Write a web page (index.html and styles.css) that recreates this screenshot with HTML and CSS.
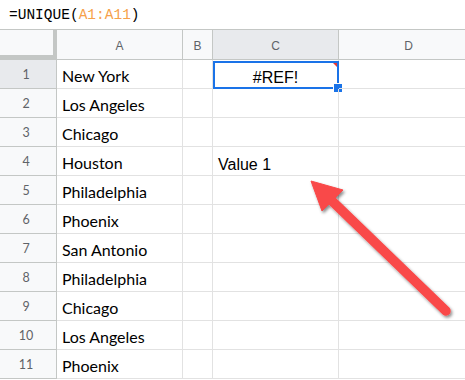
FILE: index.html
```html
<!DOCTYPE html>
<html>
<head>
<meta charset="utf-8">
<link rel="stylesheet" href="styles.css">
</head>
<body>
<div class="page">
  <div class="formula-bar"><span class="fx">=UNIQUE(</span><span class="ref">A1:A11</span><span class="fx">)</span></div>
  <div class="sheet">
    <div class="corner"></div>
    <div class="colhead">A</div>
    <div class="colhead">B</div>
    <div class="colhead sel">C</div>
    <div class="colhead">D</div>

    <div class="rowhead sel">1</div><div class="cell name">New York</div><div class="cell"></div><div class="cell active"><span class="err">#REF!</span><span class="flag"></span><span class="box"></span><span class="handle"></span></div><div class="cell"></div>
    <div class="rowhead">2</div><div class="cell name">Los Angeles</div><div class="cell"></div><div class="cell"></div><div class="cell"></div>
    <div class="rowhead">3</div><div class="cell name">Chicago</div><div class="cell"></div><div class="cell"></div><div class="cell"></div>
    <div class="rowhead">4</div><div class="cell name">Houston</div><div class="cell"></div><div class="cell val">Value 1</div><div class="cell"></div>
    <div class="rowhead">5</div><div class="cell name">Philadelphia</div><div class="cell"></div><div class="cell"></div><div class="cell"></div>
    <div class="rowhead">6</div><div class="cell name">Phoenix</div><div class="cell"></div><div class="cell"></div><div class="cell"></div>
    <div class="rowhead">7</div><div class="cell name">San Antonio</div><div class="cell"></div><div class="cell"></div><div class="cell"></div>
    <div class="rowhead">8</div><div class="cell name">Philadelphia</div><div class="cell"></div><div class="cell"></div><div class="cell"></div>
    <div class="rowhead">9</div><div class="cell name">Chicago</div><div class="cell"></div><div class="cell"></div><div class="cell"></div>
    <div class="rowhead">10</div><div class="cell name">Los Angeles</div><div class="cell"></div><div class="cell"></div><div class="cell"></div>
    <div class="rowhead">11</div><div class="cell name">Phoenix</div><div class="cell"></div><div class="cell"></div><div class="cell"></div>
  </div>
  <svg class="arrow" width="465" height="380" viewBox="0 0 465 380">
    <defs>
      <filter id="sh" x="-20%" y="-20%" width="140%" height="140%">
        <feDropShadow dx="1.5" dy="2" stdDeviation="1.8" flood-color="#000" flood-opacity="0.45"/>
      </filter>
    </defs>
    <g filter="url(#sh)" fill="#f94848" stroke="#f94848">
      <line x1="446" y1="311" x2="330" y2="199" stroke-width="9.5" stroke-linecap="round"/>
      <polygon points="311,181 343,190 322,211" stroke-width="1" stroke-linejoin="round"/>
    </g>
  </svg>
</div>
</body>
</html>
```

FILE: styles.css
```css
html, body {
  margin: 0;
  padding: 0;
  background: #ffffff;
}
.page {
  position: relative;
  width: 465px;
  height: 380px;
  overflow: hidden;
}
.formula-bar {
  height: 30px;
  box-sizing: border-box;
  border-bottom: 1px solid #c4c7c5;
  padding-left: 9px;
  display: flex;
  align-items: center;
  font-family: "Liberation Mono", "DejaVu Sans Mono", monospace;
  font-size: 14.5px;
  color: #000;
}
.ref {
  color: #f6a14b;
}
.sheet {
  display: grid;
  grid-template-columns: 57px 126px 30px 126px 140px;
  grid-template-rows: 30px repeat(11, 29px);
}
.corner {
  background: #f8f9fa;
  border-right: 4px solid #c4c7c5;
  border-bottom: 5px solid #c4c7c5;
}
.colhead {
  background: #f8f9fa;
  border-right: 1px solid #c4c7c5;
  border-bottom: 1px solid #c4c7c5;
  display: flex;
  align-items: center;
  justify-content: center;
  font-family: "Liberation Sans", Arial, sans-serif;
  font-size: 12px;
  color: #5f6368;
  padding-top: 2px;
}
.colhead.sel, .rowhead.sel {
  background: #e8eaed;
}
.rowhead {
  background: #f8f9fa;
  border-right: 1px solid #c4c7c5;
  border-bottom: 1px solid #c4c7c5;
  display: flex;
  align-items: center;
  justify-content: center;
  padding-right: 4px;
  padding-top: 1px;
  font-family: Lato, "Open Sans", sans-serif;
  font-size: 12.5px;
  color: #5f6368;
}
.cell {
  position: relative;
  border-right: 1px solid #e2e2e2;
  border-bottom: 1px solid #e2e2e2;
  display: flex;
  align-items: flex-end;
  padding-left: 5px;
  white-space: nowrap;
  line-height: 18px;
}
.name {
  font-family: Lato, "Open Sans", sans-serif;
  font-size: 16px;
  color: #000;
  padding-bottom: 3px;
}
.val {
  font-family: "Liberation Sans", Arial, sans-serif;
  font-size: 16px;
  color: #000;
  padding-bottom: 1px;
}
.active {
  justify-content: center;
  padding-left: 0;
  padding-bottom: 1px;
  font-family: "Liberation Sans", Arial, sans-serif;
  font-size: 16px;
  color: #000;
}
.box {
  position: absolute;
  left: 0;
  top: 1px;
  right: -1px;
  bottom: -1px;
  border: 2px solid #1a73e8;
}
.flag {
  position: absolute;
  top: 2px;
  right: 1px;
  width: 0;
  height: 0;
  border-top: 5px solid #e53935;
  border-left: 5px solid transparent;
}
.handle {
  position: absolute;
  right: -5px;
  bottom: -5px;
  width: 8px;
  height: 8px;
  background: #1a73e8;
  border: 1px solid #ffffff;
}
.arrow {
  position: absolute;
  left: 0;
  top: 0;
}
```
